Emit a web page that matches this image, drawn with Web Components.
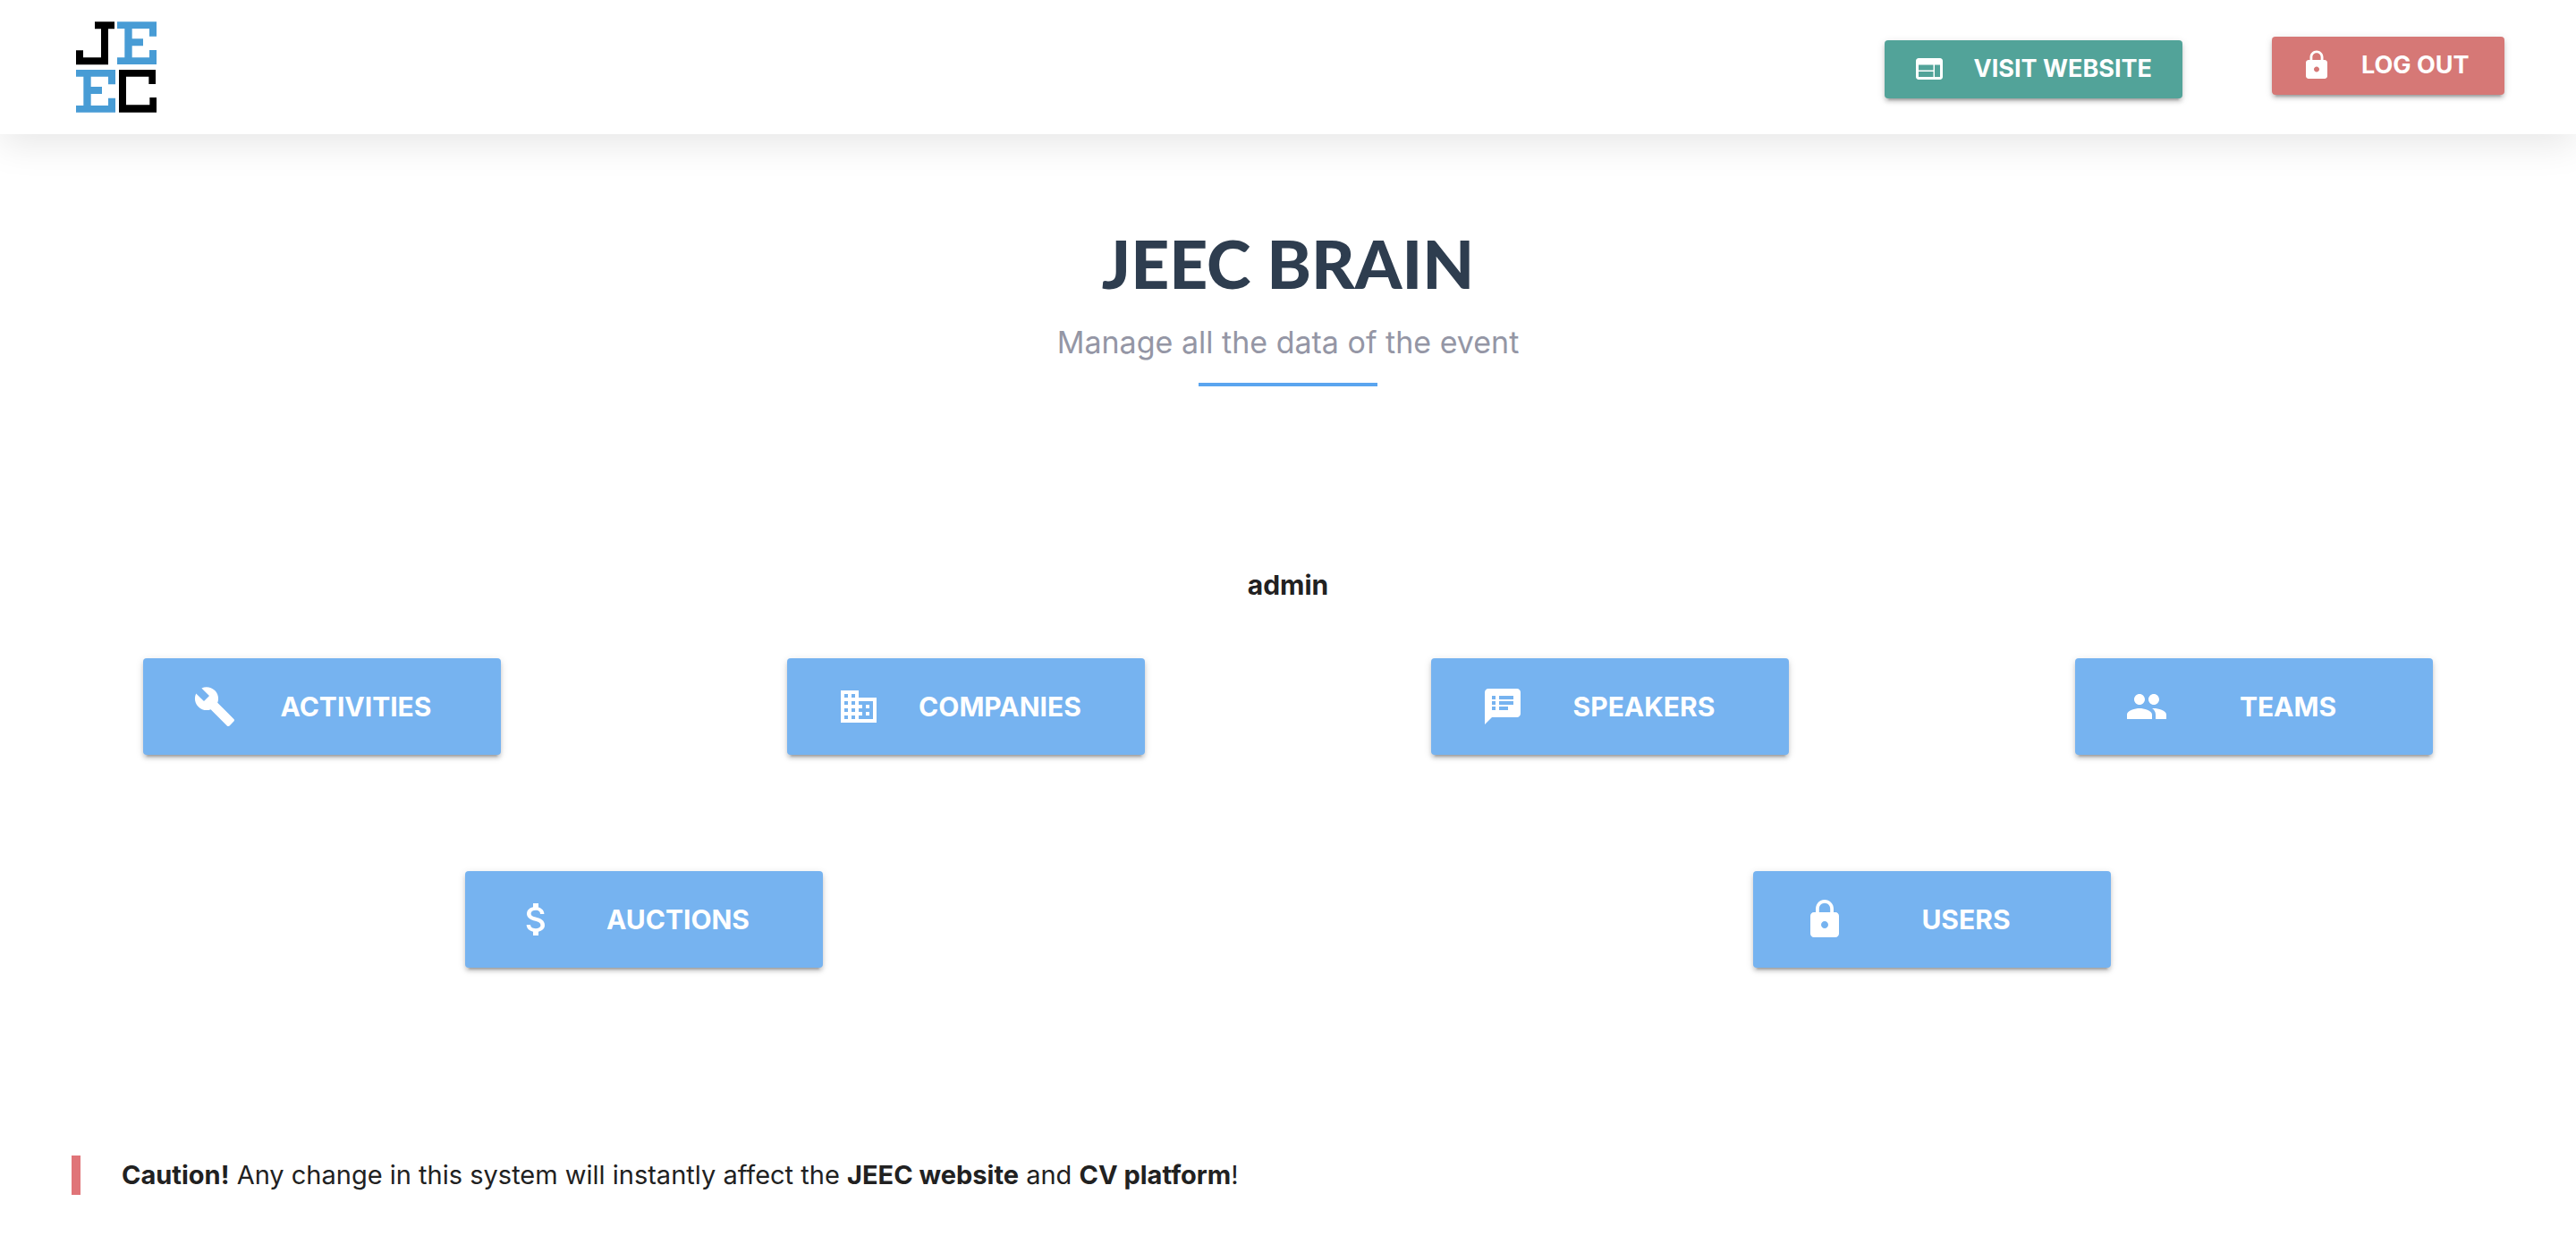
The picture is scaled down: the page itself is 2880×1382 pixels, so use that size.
<!DOCTYPE html>
<html lang="en">
<head>
<meta charset="utf-8">
<title>JEEC Brain</title>
<style>
  body { margin: 0; background: #fff; color: #212121; font-family: Inter, "Liberation Sans", sans-serif; font-size: 29px; }
</style>
</head>
<body>
<brain-app></brain-app>

<script>
const ICONS = {
  web: 'M20 4H4c-1.1 0-1.99.9-1.99 2L2 18c0 1.1.9 2 2 2h16c1.1 0 2-.9 2-2V6c0-1.1-.9-2-2-2zm-5 14H4v-4h11v4zm0-5H4V9h11v4zm5 5h-4V9h4v9z',
  lock: 'M18 8h-1V6c0-2.76-2.24-5-5-5S7 3.24 7 6v2H6c-1.1 0-2 .9-2 2v10c0 1.1.9 2 2 2h12c1.1 0 2-.9 2-2V10c0-1.1-.9-2-2-2zm-6 9c-1.1 0-2-.9-2-2s.9-2 2-2 2 .9 2 2-.9 2-2 2zm3.1-9H8.9V6c0-1.71 1.39-3.1 3.1-3.1 1.71 0 3.1 1.39 3.1 3.1v2z',
  build: 'M22.7 19l-9.1-9.1c.9-2.3.4-5-1.5-6.9-2-2-5-2.4-7.4-1.3L9 6 6 9 1.6 4.7C.4 7.1.9 10.1 2.9 12.1c1.9 1.9 4.6 2.4 6.9 1.5l9.1 9.1c.4.4 1 .4 1.4 0l2.3-2.3c.5-.4.5-1.1.1-1.4z',
  business: 'M12 7V3H2v18h20V7H12zM6 19H4v-2h2v2zm0-4H4v-2h2v2zm0-4H4V9h2v2zm0-4H4V5h2v2zm4 12H8v-2h2v2zm0-4H8v-2h2v2zm0-4H8V9h2v2zm0-4H8V5h2v2zm10 12h-8v-2h2v-2h-2v-2h2v-2h-2V9h8v10zm-2-8h-2v2h2v-2zm0 4h-2v2h2v-2z',
  notes: 'M20 2H4c-1.1 0-1.99.9-1.99 2L2 22l4-4h14c1.1 0 2-.9 2-2V4c0-1.1-.9-2-2-2zM8 14H6v-2h2v2zm0-3H6V9h2v2zm0-3H6V6h2v2zm7 6h-5v-2h5v2zm3-3h-8V9h8v2zm0-3h-8V6h8v2z',
  people: 'M16 11c1.66 0 2.99-1.34 2.99-3S17.66 5 16 5c-1.66 0-3 1.34-3 3s1.34 3 3 3zm-8 0c1.66 0 2.99-1.34 2.99-3S9.66 5 8 5C6.34 5 5 6.34 5 8s1.34 3 3 3zm0 2c-2.33 0-7 1.17-7 3.5V19h14v-2.5c0-2.33-4.67-3.5-7-3.5zm8 0c-.29 0-.62.02-.97.05 1.16.84 1.97 1.97 1.97 3.45V19h6v-2.5c0-2.33-4.67-3.5-7-3.5z',
  money: 'M11.8 10.9c-2.27-.59-3-1.2-3-2.15 0-1.09 1.01-1.85 2.7-1.85 1.78 0 2.44.85 2.5 2.1h2.21c-.07-1.72-1.12-3.3-3.21-3.81V3h-3v2.16c-1.94.42-3.5 1.68-3.5 3.61 0 2.31 1.91 3.46 4.7 4.13 2.5.6 3 1.48 3 2.41 0 .69-.49 1.79-2.7 1.79-2.06 0-2.87-.92-2.98-2.1h-2.2c.12 2.19 1.76 3.42 3.68 3.83V21h3v-2.15c1.95-.37 3.5-1.5 3.5-3.55 0-2.84-2.43-3.81-4.7-4.4z'
};

class BrainElement extends HTMLElement {
  connectedCallback() {
    if (!this.shadowRoot) this.attachShadow({ mode: 'open' }).innerHTML = this.render();
  }
}

customElements.define('brain-icon', class extends BrainElement {
  render() {
    return `<style>
      :host { display: block; flex: none; width: var(--icon-size, 36px); height: var(--icon-size, 36px); }
      svg { display: block; width: 100%; height: 100%; fill: currentColor; }
    </style>
    <svg viewBox="0 0 24 24" aria-hidden="true"><path d="${ICONS[this.getAttribute('name')]}"/></svg>`;
  }
});

customElements.define('brain-logo', class extends BrainElement {
  render() {
    return `<style>
      :host { display: block; padding: 0 5px; }
      svg { display: block; width: 90px; height: 102px; }
    </style>
    <svg viewBox="0 0 270 306" role="img" aria-label="JEEC">
      <g fill="#000">
        <path d="M63 1H129V25H108V145H0V97H24V121H84V25H63Z"/>
        <path d="M144 162H267V210H244V185H168V280H247V255H270V305H144Z"/>
      </g>
      <g fill="#489cd5">
        <path d="M138 1H270V50H246V24H188V58H225V82H188V121H246V96H270V144H138V121H163V24H138Z"/>
        <path d="M138 1H270V50H246V24H188V58H225V82H188V121H246V96H270V144H138V121H163V24H138Z" transform="translate(-138 161)"/>
      </g>
    </svg>`;
  }
});

/* Raised button with a leading icon; renders a link when href is set. */
customElements.define('brain-button', class extends BrainElement {
  render() {
    const href = this.getAttribute('href');
    const tag = href ? 'a' : 'button';
    const attrs = href ? `href="${href}"` : 'type="button"';
    return `<style>
      :host { display: block; }
      .btn {
        box-sizing: border-box; display: flex; align-items: center; gap: 32px;
        width: 100%; min-width: 260px; height: 65px; margin: 0; padding: 0 34px 0 32px;
        border: 0; border-radius: 4px; background: var(--button-color); color: #fff;
        font: 700 27px/36px Inter, "Liberation Sans", sans-serif;
        text-transform: uppercase; text-decoration: none; white-space: nowrap; cursor: pointer;
        box-shadow: 0 6px 2px -4px rgba(0,0,0,.2), 0 4px 4px rgba(0,0,0,.14), 0 2px 10px rgba(0,0,0,.12);
      }
      :host([large]) { --icon-size: 48px; width: 400px; }
      :host([large]) .btn { height: 108px; padding: 0 56px; gap: 28px; font-size: 30px; }
      :host([large]) span { flex: 1; text-align: center; }
    </style>
    <${tag} class="btn" ${attrs}><brain-icon name="${this.getAttribute('icon')}"></brain-icon><span><slot></slot></span></${tag}>`;
  }
});

customElements.define('brain-header', class extends BrainElement {
  render() {
    return `<style>
      :host { display: block; }
      header {
        box-sizing: border-box; display: flex; align-items: center; justify-content: space-between;
        height: 150px; padding: 0 80px; background: #fff; box-shadow: 0 10px 40px rgba(0,0,0,.1);
      }
      nav { display: flex; align-items: flex-end; gap: 100px; }
      .visit { --button-color: #52a399; }
      .logout { --button-color: #d67876; }
      form { margin: 0; padding-bottom: 4px; }
    </style>
    <header>
      <brain-logo></brain-logo>
      <nav>
        <brain-button class="visit" icon="web" href="#website">Visit website</brain-button>
        <form><brain-button class="logout" icon="lock">Log out</brain-button></form>
      </nav>
    </header>`;
  }
});

customElements.define('brain-hero', class extends BrainElement {
  render() {
    return `<style>
      :host { display: flex; flex-direction: column; align-items: center; gap: 24px; padding-top: 100px; text-align: center; }
      h1 { margin: 0; font: 900 75px/88px Lato, "Liberation Sans", sans-serif; color: #2e3d4f; }
      p { margin: 0; font-size: 34px; line-height: 42px; color: #9496a5; }
      hr { width: 200px; height: 4px; margin: 0; border: 0; background: #5aa5ef; }
    </style>
    <h1><slot name="title"></slot></h1>
    <p><slot></slot></p>
    <hr>`;
  }
});

customElements.define('brain-menu', class extends BrainElement {
  render() {
    return `<style>
      :host { display: flex; flex-direction: column; gap: 130px; }
      .row { display: flex; justify-content: space-around; --button-color: #76b3f0; }
    </style>
    <div class="row">
      <brain-button large icon="build">Activities</brain-button>
      <brain-button large icon="business">Companies</brain-button>
      <brain-button large icon="notes">Speakers</brain-button>
      <brain-button large icon="people">Teams</brain-button>
    </div>
    <div class="row">
      <brain-button large icon="money">Auctions</brain-button>
      <brain-button large icon="lock">Users</brain-button>
    </div>`;
  }
});

customElements.define('brain-notice', class extends BrainElement {
  render() {
    return `<style>
      :host { display: block; padding: 0 80px; }
      p { margin: 0; padding-left: 46px; border-left: 10px solid #e07478; line-height: 44px; }
    </style>
    <p><slot></slot></p>`;
  }
});

customElements.define('brain-app', class extends BrainElement {
  render() {
    return `<style>
      :host { display: block; }
      .role { margin: 204px 0 64px; font-size: 30px; line-height: 36px; font-weight: 700; text-align: center; }
      brain-notice { margin-top: 210px; padding-bottom: 40px; }
      b { font-weight: 700; }
    </style>
    <brain-header></brain-header>
    <main>
      <brain-hero><span slot="title">JEEC BRAIN</span>Manage all the data of the event</brain-hero>
      <p class="role">admin</p>
      <brain-menu></brain-menu>
      <brain-notice><b>Caution!</b> Any change in this system will instantly affect the <b>JEEC website</b> and <b>CV platform</b>!</brain-notice>
    </main>`;
  }
});
</script>
</body>
</html>
